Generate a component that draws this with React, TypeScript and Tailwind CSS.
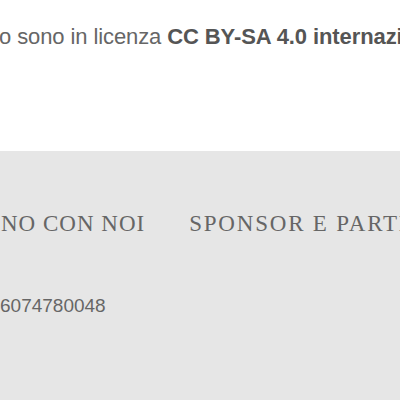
import type React from "react";

const App: React.FC = () => {
  return (
    <div className="w-[400px] h-[400px] overflow-hidden bg-white">
      {/* Licenza */}
      <div className="h-[151px] pt-[20px] whitespace-nowrap font-['Liberation_Sans',Arial,sans-serif] text-[22px] text-[#666]">
        <p className="-ml-[1px] tracking-[-0.1px]">
          o sono in licenza <strong className="font-bold text-[#555]">CC BY-SA 4.0 internazionale</strong>
        </p>
      </div>

      {/* Footer */}
      <footer className="h-[249px] bg-[#e6e6e6] overflow-hidden">
        <nav className="flex gap-[44px] pt-[56px] whitespace-nowrap font-['Liberation_Serif','Times_New_Roman',serif] text-[23px] text-[#666]">
          <a className="ml-[1px] tracking-[1px]">NO CON NOI</a>
          <a className="tracking-[1.8px]">SPONSOR E PARTNER</a>
        </nav>
        <p className="mt-[50px] font-['Liberation_Sans',Arial,sans-serif] text-[19px] text-[#666]">6074780048</p>
      </footer>
    </div>
  );
};

export default App;
